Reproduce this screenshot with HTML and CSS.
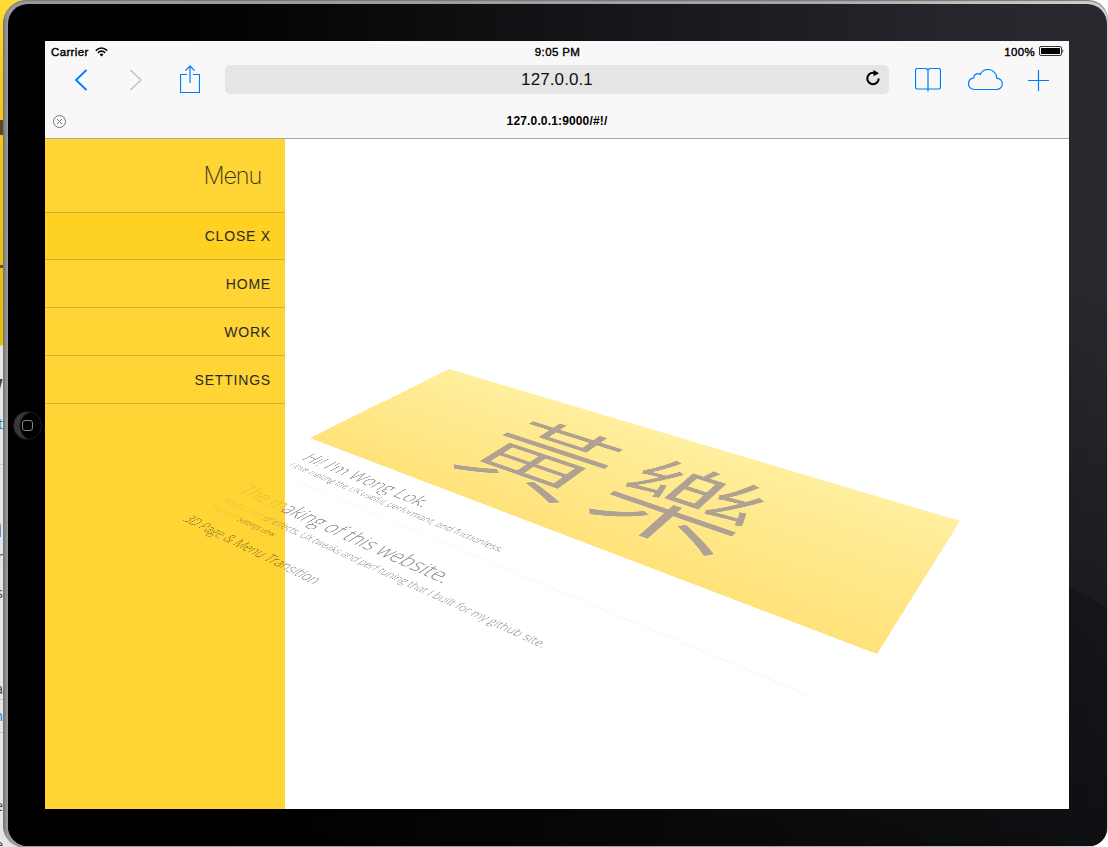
FILE: index.html
```
<!DOCTYPE html>
<html lang="en">
<head>
<meta charset="utf-8">
<title>127.0.0.1:9000/#!/</title>
<link rel="stylesheet" href="styles.css">
</head>
<body>
<div class="desktop">
  <div class="behind" aria-hidden="true">
    <span class="block"></span><span class="tick"></span>
    <span class="peek big" style="top:370px">W</span>
    <span class="peek link" style="top:415px">st</span>
    <span class="peek big" style="top:507px">a</span>
    <span class="peek" style="top:548px">r</span>
    <span class="peek" style="top:584px">s</span>
    <span class="peek" style="top:680px">a</span>
    <span class="peek link" style="top:707px">m</span>
    <span class="peek" style="top:797px">e</span>
    <span class="peek" style="top:836px">e</span>
    <i style="top:464px"></i><i style="top:699px"></i><i style="top:732px"></i>
  </div>
  <div class="tablet">
    <div class="bezel">
      <div class="home-button"><span></span></div>
      <div class="screen">
        <header class="browser">
          <div class="status">
            <div class="carrier">Carrier
              <svg width="13" height="10" viewBox="0 0 13 10" fill="none" stroke="#000" stroke-width="1.6"><path d="M.8 3.6Q6.5-1.6 12.2 3.6M2.8 5.8Q6.5 2.4 10.2 5.8"/><path d="M4.6 7.4Q6.5 5.8 8.4 7.4L6.5 9.4Z" fill="#000" stroke="none"/></svg>
            </div>
            <div class="time">9:05 PM</div>
            <div class="battery">100%
              <svg width="25" height="10" viewBox="0 0 25 10"><rect x=".5" y=".5" width="22" height="9" rx="1.5" fill="none" stroke="#000" stroke-width=".8"/><rect x="2" y="2" width="19" height="6" rx=".5"/><path d="M23.5 3q1.600 2 0 4z"/></svg>
            </div>
          </div>
          <div class="toolbar">
            <svg class="back" width="14" height="22" viewBox="0 0 14 22"><path d="M12.500 1 2 11l10.500 10"/></svg>
            <svg class="forward" width="14" height="22" viewBox="0 0 14 22"><path d="M1.500 1 12 11 1.500 21"/></svg>
            <svg class="share" width="20" height="28" viewBox="0 0 20 28"><path d="M7 9.500H.5v18h19v-18H13M10 18V1.500M5.500 5.500 10 1l4.500 4.500"/></svg>
            <div class="address"><span>127.0.0.1</span>
              <svg width="15" height="16" viewBox="0 0 15 16"><path d="M12.700 8.500A5.700 5.700 0 1 1 7 2.800h2" fill="none" stroke="#000" stroke-width="2"/><path d="M7.500 0 13 3.200 7.500 6.300z"/></svg>
            </div>
            <svg class="book" width="26" height="24" viewBox="0 0 26 24"><path d="M13 2.500Q12.500.5 10.500.5h-8q-2 0-2 2v16.500q0 2 2 2h10.500M13 2.500Q13.500.5 15.500.5h8q2 0 2 2v16.500q0 2-2 2H13M13 2.500v21"/></svg>
            <svg class="cloud" width="35" height="22" viewBox="0 0 35 22"><path d="M6.500 20.500h22a5.600 5.600 0 0 0 .3-11.300C28.800 4.500 24.800.5 20 .5c-3.600 0-6.300 1.900-7.700 5C9.500 3.500 5.600 5.400 5.700 8.900 2.500 9.500.5 11.800.5 14.700c0 3.300 2.600 5.800 6 5.800z"/></svg>
            <svg class="plus" width="21" height="21" viewBox="0 0 21 21"><path d="M10.500 0v21M0 10.500h21"/></svg>
          </div>
          <div class="tabbar">
            <svg width="13" height="13" viewBox="0 0 13 13"><circle cx="6.500" cy="6.500" r="6"/><path d="m4 4 5 5M9 4 4 9"/></svg>
            <span>127.0.0.1:9000/#!/</span>
          </div>
        </header>
        <main class="page">
          <nav class="menu">
            <h2>Menu</h2>
            <a class="active">CLOSE X</a>
            <a>HOME</a>
            <a>WORK</a>
            <a>SETTINGS</a>
          </nav>
          <article class="plane">
            <div class="hero" lang="zh-Hant"><span>黃</span><span>樂</span></div>
            <section class="intro">
              <h1>Hi! I'm Wong Lok.</h1>
              <p>I love making the UX useful, performant, and frictionless.</p>
            </section>
            <section class="making">
              <h1><span class="sunk">The m</span>aking of this website.</h1>
              <p><span class="sunk">Here's a list</span><span class="mid"> of effe</span>cts, UX tweaks and perf tuning that I built for my github site.</p>
              <p class="note"><span class="sunk">This is the </span><span class="over">settings view.</span></p>
              <h3><span class="over">3D Page &amp; Menu Tra</span>nsition</h3>
            </section>
          </article>
        </main>
      </div>
    </div>
  </div>
</div>
</body>
</html>
```
FILE: styles.css
```
* { box-sizing: border-box; }
body { margin: 0; font-family: "Liberation Sans", Arial, sans-serif; }
.desktop { position: relative; width: 1108px; height: 847px; overflow: hidden; background: #fff; }
.behind { position: absolute; inset: 0 auto 0 0; width: 60px; height: 847px; background: linear-gradient(#ffdc35 0, #f5c81c 80px, #e9bc00 345px, #e6e6e6 346px); overflow: hidden; }
.block { position: absolute; top: 120px; width: 6px; height: 15px; background: #604520; }
.tick { position: absolute; top: 265px; width: 3px; height: 3px; background: #65501b; }
.peek { position: absolute; right: 57px; font: 14px/18px "Open Sans", sans-serif; color: #444; }
.peek.big { font-size: 30px; line-height: 38px; }
.peek.link { color: #2377b5; }
.behind i { position: absolute; width: 8px; height: 1px; background: #c8c8c8; }
.tablet { position: relative; width: 1105px; height: 848px; margin-left: 3px; padding: 4px 1px 2px 5px; border-radius: 24px 20px 22px 22px; background: linear-gradient(90deg, #707070, #999 4px, #a4a4a4 70%, #d2d2cf); box-shadow: inset 0 1px 1px #777; }
.bezel { position: relative; height: 842px; padding: 37px 0 0 37px; border-radius: 20px 20px 18px 20px; background: linear-gradient(transparent 30%, rgba(0, 0, 0, .35) 72%), linear-gradient(90deg, #000 0, #000 15%, #0d0e10 40%, #25262b 85%, #292a2f); overflow: hidden; }
.bezel::before { content: ""; position: absolute; right: 0; top: 540px; width: 1099px; height: 302px; background: linear-gradient(transparent 20%, rgba(0, 0, 0, .3)), linear-gradient(90deg, #000 20%, #15161a); clip-path: polygon(0 0, 1061px 42px, 100% 64px, 100% 100%, 0 100%); }
.home-button { position: absolute; left: 5px; top: 407px; width: 29px; height: 29px; border-radius: 50%; border: 1px solid #1c1c1c; background: radial-gradient(circle at 21px 14px, #000 14px, #383838 16px); display: grid; place-items: center; }
.home-button span { width: 11px; height: 11px; border: 1px solid #858585; border-radius: 3px; }
.screen { position: relative; width: 1024px; height: 768px; background: #fff; overflow: hidden; }
.browser { height: 98px; background: #f8f8f8; border-bottom: 1px solid #a9a9a9; }
.status { height: 20px; padding: 2px 5px 0 6px; display: grid; grid-template-columns: 1fr auto 1fr; font-size: 11.5px; line-height: 18px; color: #000; -webkit-text-stroke: .4px #000; letter-spacing: .35px; }
.carrier, .battery { display: flex; align-items: center; gap: 6px; }
.battery { justify-content: flex-end; gap: 4px; }
.carrier svg, .battery svg { margin-top: -1px; }
.battery svg { margin-top: -2px; }
.toolbar { height: 38px; display: flex; align-items: center; padding: 0 20px 0 29px; }
.toolbar > svg { fill: none; stroke: #007aff; stroke-width: 1.2; flex: none; }
.toolbar .back { stroke-width: 1.8; }
.toolbar .forward { stroke: #c5c5c5; stroke-width: 1.6; margin-left: 41px; }
.toolbar .share { margin-left: 37px; margin-top: -2px; }
.address { position: relative; width: 664px; height: 29px; margin-left: 25px; border-radius: 5px; background: #e5e5e5; display: flex; align-items: center; justify-content: center; font-size: 17px; letter-spacing: .1px; color: #111; margin-top: -1px; }
.address svg { position: absolute; right: 8px; top: 5px; }
.book { margin-left: 26px; }
.cloud { margin-left: 27px; margin-top: -1px; }
.plus { margin-left: 25px; }
.tabbar { height: 39px; padding: 4px 12px 0 8px; display: grid; grid-template-columns: 13px 1fr 9px; align-items: center; font-size: 12px; letter-spacing: .15px; font-weight: bold; text-align: center; color: #000; }
.tabbar svg { fill: none; stroke: #777; stroke-width: 1; margin-top: 1px; }
.page { position: relative; height: 670px; }
.menu { width: 240px; height: 671px; background: #ffd535; text-align: right; color: #2b2928; }
.menu h2 { margin: 0; height: 74px; padding: 0 24px 0 0; border-bottom: 1px solid #d4b02e; font: 200 23.5px/74px Inter, sans-serif; letter-spacing: -1.2px; color: #3a331c; }
.menu a { display: block; height: 48px; padding-right: 14px; border-bottom: 1px solid #d4b02e; font-size: 14px; line-height: 48px; letter-spacing: .8px; }
.menu a.active { background: #ffd123; height: 47px; line-height: 46px; }
.plane { position: absolute; left: 0; top: 0; width: 1024px; height: 700px; transform-origin: 0 0; transform: translate(-45px, -139px) matrix3d(.256038, .016567, 0, -.00025311, -.518226, .026066, 0, -.00039059, 0, 0, 1, 0, 449, 369, 0, 1); font-family: "Open Sans", sans-serif; font-weight: 300; color: #8c8c8c; }
.hero { height: 350px; display: flex; justify-content: center; gap: 24px; padding-left: 8px; background: linear-gradient(#ffef9f, #ffe27a); font: 400 244px/338px "Noto Sans CJK TC", sans-serif; color: #b0a293; -webkit-text-stroke: 3px #ffe98d; }
.plane section { padding: 0 41px 0 47px; }
.plane h1, .plane h3, .plane p { margin: 0; font-weight: 300; white-space: nowrap; }
.plane h1 { font-size: 36px; line-height: 40px; }
.plane p { font-size: 18px; line-height: 24px; }
.plane p.note { font-size: 14px; padding-left: 3px; }
.intro { height: 111px; padding-top: 26px !important; position: relative; }
.intro::after { content: ""; position: absolute; left: 78px; right: 41px; bottom: 0; height: 1px; background: #f1f1f1; }
.making { padding-top: 39px !important; }
.making h1 { margin-bottom: 4px; }
.making h3 { font-size: 23.7px; line-height: 36px; margin-top: 10px; }
.plane .sunk { color: #e7c02f; }
.plane .mid { color: #b49a3b; }
.plane .over { color: #8a7425; }
```
